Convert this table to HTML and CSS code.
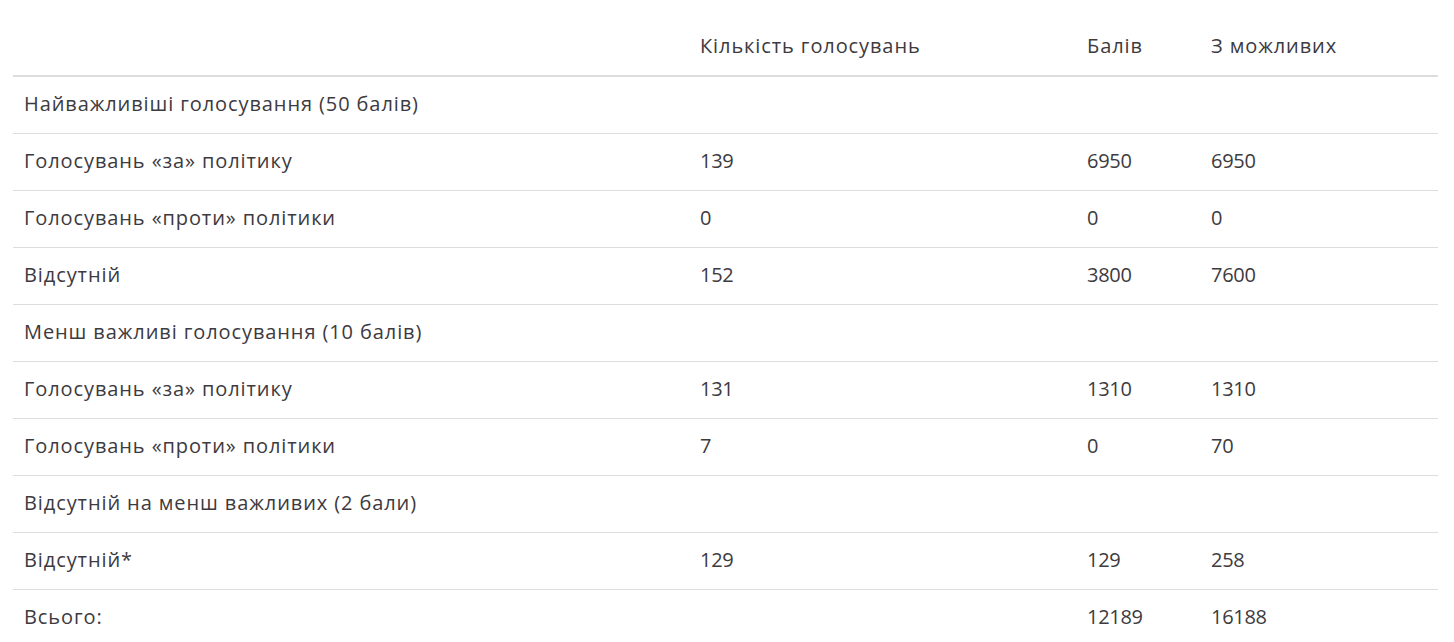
FILE: index.html
```html
<!DOCTYPE html>
<html lang="uk">
<head>
<meta charset="utf-8">
<title>Голосування</title>
<link rel="stylesheet" href="styles.css">
</head>
<body>
<div class="wrap">
<table class="votes">
  <colgroup>
    <col class="c1"><col class="c2"><col class="c3"><col class="c4">
  </colgroup>
  <thead>
    <tr><th></th><th>Кількість голосувань</th><th>Балів</th><th>З можливих</th></tr>
  </thead>
  <tbody>
    <tr><td>Найважливіші голосування (50 балів)</td><td></td><td></td><td></td></tr>
    <tr><td>Голосувань «за» політику</td><td class="num">139</td><td class="num">6950</td><td class="num">6950</td></tr>
    <tr><td>Голосувань «проти» політики</td><td class="num">0</td><td class="num">0</td><td class="num">0</td></tr>
    <tr><td>Відсутній</td><td class="num">152</td><td class="num">3800</td><td class="num">7600</td></tr>
    <tr><td>Менш важливі голосування (10 балів)</td><td></td><td></td><td></td></tr>
    <tr><td>Голосувань «за» політику</td><td class="num">131</td><td class="num">1310</td><td class="num">1310</td></tr>
    <tr><td>Голосувань «проти» політики</td><td class="num">7</td><td class="num">0</td><td class="num">70</td></tr>
    <tr><td>Відсутній на менш важливих (2 бали)</td><td></td><td></td><td></td></tr>
    <tr><td>Відсутній*</td><td class="num">129</td><td class="num">129</td><td class="num">258</td></tr>
    <tr><td>Всього:</td><td></td><td class="num">12189</td><td class="num">16188</td></tr>
  </tbody>
</table>
</div>
</body>
</html>
```
FILE: styles.css
```css
html, body {
  margin: 0;
  padding: 0;
  background: #fff;
}
.wrap {
  padding: 19px 16px 0 13px;
}
.votes {
  width: 1425px;
  border-collapse: collapse;
  table-layout: fixed;
  font-family: "Open Sans", "Noto Sans", sans-serif;
  font-size: 20px;
  letter-spacing: 0.9px;
  color: #3d3a40;
}
.c1 { width: 676px; }
.c2 { width: 387px; }
.c3 { width: 124px; }
.c4 { width: 238px; }
.votes th {
  font-weight: normal;
  text-align: left;
  padding: 0 11px 4px;
  height: 52px;
  border-bottom: 2px solid #dddddd;
  vertical-align: middle;
}
.votes td {
  padding: 0 11px 4px;
  height: 52px;
  border-top: 1px solid #dddddd;
  vertical-align: middle;
  white-space: nowrap;
}
.votes td.num {
  letter-spacing: -0.3px;
}
.votes tbody tr:first-child td {
  border-top: none;
}
```
